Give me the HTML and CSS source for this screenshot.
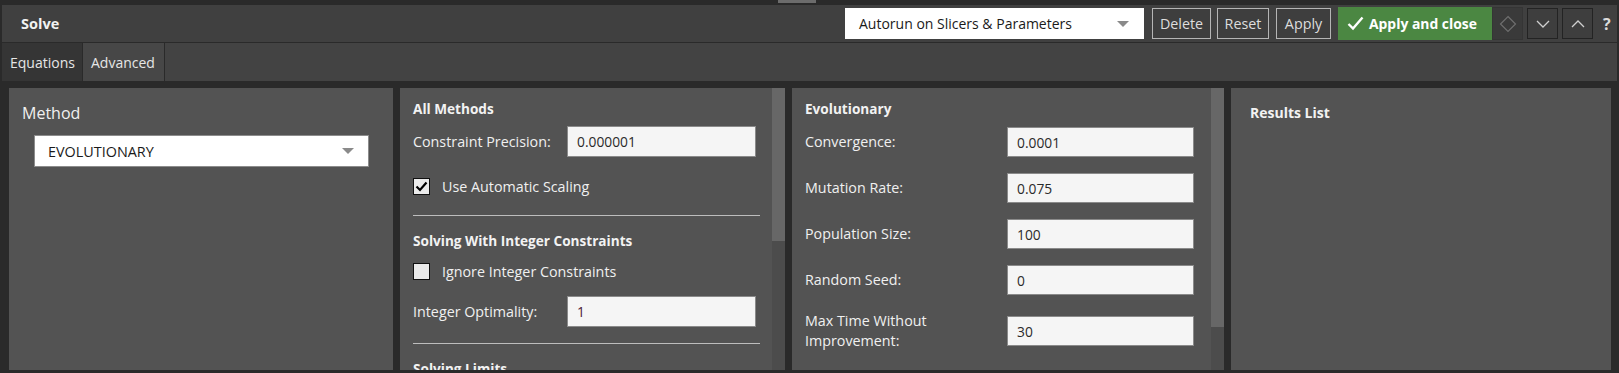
FILE: index.html
```html
<!DOCTYPE html>
<html>
<head>
<meta charset="utf-8">
<link rel="stylesheet" href="styles.css">
</head>
<body>
<div class="topstrip"><div class="topstrip-mark"></div></div>
<header class="header">
  <div class="title">Solve</div>
  <div class="controls">
    <div class="select select-auto">
      <span>Autorun on Slicers &amp; Parameters</span>
      <span class="caret"></span>
    </div>
    <button class="btn">Delete</button>
    <button class="btn">Reset</button>
    <button class="btn">Apply</button>
    <button class="btn-green">
      <svg width="17" height="15" viewBox="0 0 17 15"><path d="M1.5 8 L6 12.5 L15.5 1.5" fill="none" stroke="#fff" stroke-width="2.4"/></svg>
      <span>Apply and close</span>
    </button>
    <button class="icon-btn icon-btn-disabled">
      <svg width="18" height="18" viewBox="0 0 18 18"><path d="M9 1.5 L16.5 9 L9 16.5 L1.5 9 Z" fill="none" stroke="#6e6e6e" stroke-width="1.2"/></svg>
    </button>
    <button class="icon-btn">
      <svg width="14" height="8" viewBox="0 0 14 8"><path d="M1 1 L7 7 L13 1" fill="none" stroke="#cfcfcf" stroke-width="1.3"/></svg>
    </button>
    <button class="icon-btn">
      <svg width="14" height="8" viewBox="0 0 14 8"><path d="M1 7 L7 1 L13 7" fill="none" stroke="#cfcfcf" stroke-width="1.3"/></svg>
    </button>
    <span class="help">?</span>
  </div>
</header>
<nav class="tabs">
  <div class="tab">Equations</div>
  <div class="tab tab-active">Advanced</div>
  <div class="tab-rest"></div>
</nav>
<main class="main">
  <section class="panel panel-method">
    <div class="method-label">Method</div>
    <div class="select select-method">
      <span>EVOLUTIONARY</span>
      <span class="caret"></span>
    </div>
  </section>
  <section class="panel panel-all">
    <div class="panel-body">
      <h3 class="heading">All Methods</h3>
      <div class="row row-first">
        <label class="label label-narrow">Constraint Precision:</label>
        <div class="input">0.000001</div>
      </div>
      <div class="check-row check-first">
        <span class="checkbox checked">
          <svg width="13" height="11" viewBox="0 0 13 11"><path d="M1.5 5.5 L5 9 L11.5 1.5" fill="none" stroke="#000" stroke-width="2.2"/></svg>
        </span>
        <span class="check-label">Use Automatic Scaling</span>
      </div>
      <hr class="sep sep-1">
      <h3 class="heading heading-2">Solving With Integer Constraints</h3>
      <div class="check-row check-second">
        <span class="checkbox"></span>
        <span class="check-label">Ignore Integer Constraints</span>
      </div>
      <div class="row row-int">
        <label class="label label-narrow">Integer Optimality:</label>
        <div class="input input-int">1</div>
      </div>
      <hr class="sep sep-2">
      <h3 class="heading heading-3">Solving Limits</h3>
    </div>
    <div class="scrollbar"><div class="thumb thumb-all"></div></div>
  </section>
  <section class="panel panel-evo">
    <div class="panel-body">
      <h3 class="heading">Evolutionary</h3>
      <div class="row evo-row evo-first">
        <label class="label label-wide">Convergence:</label>
        <div class="input input-evo">0.0001</div>
      </div>
      <div class="row evo-row">
        <label class="label label-wide">Mutation Rate:</label>
        <div class="input input-evo">0.075</div>
      </div>
      <div class="row evo-row">
        <label class="label label-wide">Population Size:</label>
        <div class="input input-evo">100</div>
      </div>
      <div class="row evo-row">
        <label class="label label-wide">Random Seed:</label>
        <div class="input input-evo">0</div>
      </div>
      <div class="row evo-row evo-last">
        <label class="label label-wide label-two">Max Time Without<br>Improvement:</label>
        <div class="input input-evo">30</div>
      </div>
    </div>
    <div class="scrollbar"><div class="thumb thumb-evo"></div></div>
  </section>
  <section class="panel panel-results">
    <h3 class="heading heading-results">Results List</h3>
  </section>
</main>
</body>
</html>
```

FILE: styles.css
```css
* { box-sizing: border-box; }
html, body {
  margin: 0;
  padding: 0;
  background: #2a2a2a;
  width: 1619px;
  height: 373px;
  overflow: hidden;
  font-family: "Open Sans", "Noto Sans", sans-serif;
  color: #eeeeee;
}

.topstrip {
  height: 5px;
  display: flex;
}
.topstrip-mark {
  margin-left: 778px;
  width: 38px;
  height: 3px;
  background: #6c6c6c;
}

.header {
  height: 37px;
  margin: 0 2px;
  background: #404040;
  display: flex;
  align-items: center;
  justify-content: space-between;
  padding-left: 19px;
  padding-right: 2px;
}
.title {
  font-weight: 700;
  font-size: 14.5px;
  color: #f2f2f2;
}
.controls {
  display: flex;
  align-items: center;
  height: 100%;
}

.select {
  background: #ffffff;
  border: 1px solid #8c8c8c;
  color: #1a1a1a;
  display: flex;
  align-items: center;
  justify-content: space-between;
  font-size: 14px;
}
.caret {
  width: 0;
  height: 0;
  border-left: 6px solid transparent;
  border-right: 6px solid transparent;
  border-top: 6px solid #8a8a8a;
}
.select-auto {
  width: 299px;
  height: 31px;
  padding: 0 14px 0 13px;
  border-color: #ffffff;
}

.btn {
  margin-left: 8px;
  height: 31px;
  padding: 0;
  background: #3e3e3e;
  border: 1px solid #b5b5b5;
  color: #dddddd;
  font-family: inherit;
  font-size: 14.3px;
}
.btn:nth-of-type(1) { margin-left: 8px; width: 59px; }
.btn:nth-of-type(2) { margin-left: 6px; width: 52px; }
.btn:nth-of-type(3) { margin-left: 7px; width: 55px; }

.btn-green {
  margin-left: 7px;
  height: 33px;
  width: 154px;
  background: #4b8742;
  border: none;
  color: #ffffff;
  font-family: inherit;
  font-weight: 700;
  font-size: 13.9px;
  display: flex;
  align-items: center;
  gap: 5px;
  padding: 0 0 0 9px;
}

.icon-btn {
  height: 31px;
  width: 31px;
  background: #3e3e3e;
  border: 1px solid #232323;
  display: flex;
  align-items: center;
  justify-content: center;
  padding: 0;
  margin-left: 4px;
}
.icon-btn-disabled {
  margin-left: 0;
  background: #3a3a3a;
  border-color: #353535;
  height: 33px;
}
.help {
  margin-left: 10px;
  width: 12px;
  font-weight: 700;
  font-size: 16px;
  color: #dcdcdc;
}

.tabs {
  margin: 1px 2px 0;
  height: 38px;
  display: flex;
}
.tab {
  height: 100%;
  display: flex;
  align-items: center;
  font-size: 14px;
  color: #e6e6e6;
  background: #353535;
  padding: 0 8px;
  width: 80px;
}
.tab-active {
  margin-left: 1px;
  background: #474747;
  width: 81px;
}
.tab-rest {
  margin-left: 1px;
  flex: 1;
  background: #434343;
}

.main {
  display: flex;
  gap: 7px;
  padding: 7px 8px 0 9px;
  height: 289px;
}
.panel {
  background: #535353;
  height: 282px;
  display: flex;
  overflow: hidden;
}
.panel-method { width: 384px; flex-direction: column; padding: 0 13px; }
.panel-all { width: 385px; }
.panel-evo { width: 432px; }
.panel-results { width: 380px; padding: 0 19px; }

.panel-body {
  flex: 1;
  padding: 0 13px;
  min-width: 0;
}
.scrollbar {
  width: 13px;
  background: #4c4c4c;
  height: 100%;
}
.thumb { background: #676767; width: 100%; }
.thumb-all { height: 153px; }
.thumb-evo { height: 239px; }

.method-label {
  margin-top: 14px;
  font-size: 16px;
  line-height: 22px;
  color: #f0f0f0;
}
.select-method {
  margin-top: 11px;
  margin-left: 12px;
  width: 335px;
  height: 32px;
  padding: 0 14px 0 13px;
  font-size: 14.4px;
}

.heading {
  margin: 11px 0 0;
  font-size: 13.6px;
  font-weight: 700;
  line-height: 20px;
  color: #f2f2f2;
}
.heading-results { margin-top: 15px; font-size: 14px; }

.row {
  display: flex;
  align-items: center;
}
.row-first { margin-top: 7px; }
.label {
  font-size: 14.3px;
  color: #f0f0f0;
  line-height: 20px;
}
.label-narrow { width: 154px; }
.label-wide { width: 202px; }
.input {
  background: #f5f5f5;
  border: 1px solid #8a8a8a;
  color: #2a2a2a;
  font-size: 13.8px;
  display: flex;
  align-items: center;
  padding-left: 9px;
}
.row .input { width: 189px; height: 31px; }
.input-int { color: #4a1836; }
.row .input-evo { width: 187px; height: 30px; }

.check-row {
  display: flex;
  align-items: center;
  height: 18px;
}
.check-first { margin-top: 20px; }
.check-second { margin-top: 11px; }
.checkbox {
  width: 17px;
  height: 17px;
  border: 1px solid #111;
  background: #ebebeb;
  display: flex;
  align-items: center;
  justify-content: center;
}
.check-label {
  margin-left: 12px;
  font-size: 14.3px;
  color: #f0f0f0;
}

.sep {
  margin: 0;
  border: none;
  height: 1px;
  background: #bdbdbd;
  width: 347px;
}
.sep-1 { margin-top: 20px; }
.heading-2 { margin-top: 15px; }
.row-int { margin-top: 16px; }
.sep-2 { margin-top: 16px; }
.heading-3 { margin-top: 15px; }

.evo-first { margin-top: 8px; }
.evo-row + .evo-row { margin-top: 16px; }
.evo-last { height: 40px; margin-top: 15px; }
```
